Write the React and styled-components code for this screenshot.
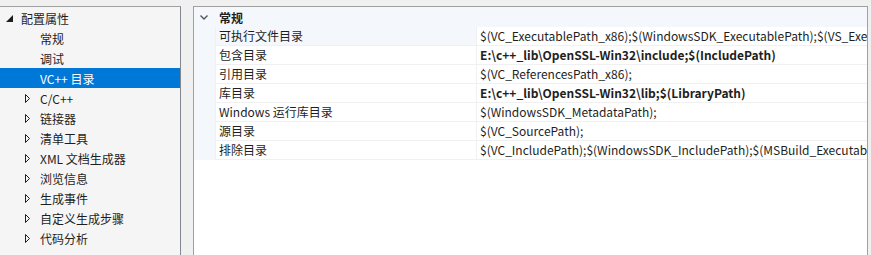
import React from 'react';
import styled, { createGlobalStyle } from 'styled-components';

const Global = createGlobalStyle`
  html, body {
    margin: 0;
    background: #f0f0f0;
  }
  body {
    font-family: "Noto Sans CJK SC", "Noto Sans", sans-serif;
    font-size: 12px;
    color: #1e1e1e;
  }
`;

const Frame = styled.div`
  display: flex;
  height: 255px;
  padding-top: 6px;
  box-sizing: border-box;
  overflow: hidden;
`;

const TreePanel = styled.div`
  width: 181px;
  flex: none;
  box-sizing: border-box;
  background: #f5f5f5;
  border-top: 1px solid #a0a0a0;
  border-right: 1px solid #828790;
  padding-top: 1px;
`;

const TreeItem = styled.div`
  display: flex;
  align-items: center;
  height: 20px;
  padding-left: ${(p) => p.$indent}px;
  background: ${(p) => (p.$selected ? '#0078d7' : 'transparent')};
  color: ${(p) => (p.$selected ? '#fff' : '#1e1e1e')};
  white-space: nowrap;
`;

const Toggle = styled.span`
  width: 15px;
  flex: none;
  display: flex;
  align-items: center;
`;

const GridPanel = styled.div`
  margin-left: 12px;
  width: 675px;
  flex: none;
  box-sizing: border-box;
  background: #fff;
  border-top: 1px solid #a0a0a0;
  border-left: 1px solid #a0a0a0;
  border-right: 1px solid #a0a0a0;
`;

const Category = styled.div`
  display: flex;
  align-items: center;
  height: 20px;
  background: #f4f7fc;
  font-weight: bold;
  padding-left: 6px;
`;

const Chevron = styled.span`
  width: 19px;
  display: flex;
  align-items: center;
`;

const Row = styled.div`
  display: grid;
  grid-template-columns: 21px 260px 1fr;
  column-gap: 1px;
  height: 19px;
  border-bottom: 1px solid #f0f0f0;
  box-sizing: border-box;
  background: #f0f0f0;
`;

const Gutter = styled.div`
  background: #f4f7fc;
  margin-bottom: -1px;
`;

const Cell = styled.div`
  background: ${(p) => (p.$focus ? '#f4f7fc' : '#fff')};
  padding-left: 3px;
  line-height: 18px;
  white-space: nowrap;
  overflow: hidden;
  font-weight: ${(p) => (p.$bold ? 'bold' : 'normal')};
`;

const Expanded = () => (
  <svg width="7" height="7" viewBox="0 0 7 7">
    <polygon points="7,0 7,7 0,7" fill="#1e1e1e" />
  </svg>
);

const Collapsed = () => (
  <svg width="5" height="9" viewBox="0 0 5 9">
    <polygon points="0.5,0.5 4.5,4.5 0.5,8.5" fill="none" stroke="#1e1e1e" strokeWidth="1" />
  </svg>
);

const Down = () => (
  <svg width="8" height="5" viewBox="0 0 8 5">
    <polyline points="0.5,0.5 4,4 7.5,0.5" fill="none" stroke="#555" strokeWidth="1.4" />
  </svg>
);

const tree = [
  { label: '常规' },
  { label: '调试' },
  { label: 'VC++ 目录', selected: true },
  { label: 'C/C++', folder: true },
  { label: '链接器', folder: true },
  { label: '清单工具', folder: true },
  { label: 'XML 文档生成器', folder: true },
  { label: '浏览信息', folder: true },
  { label: '生成事件', folder: true },
  { label: '自定义生成步骤', folder: true },
  { label: '代码分析', folder: true },
];

const rows = [
  ['可执行文件目录', '$(VC_ExecutablePath_x86);$(WindowsSDK_ExecutablePath);$(VS_ExecutablePath);$(MSBuild_ExecutablePath);$(SystemRoot)'],
  ['包含目录', 'E:\\c++_lib\\OpenSSL-Win32\\include;$(IncludePath)', true],
  ['引用目录', '$(VC_ReferencesPath_x86);'],
  ['库目录', 'E:\\c++_lib\\OpenSSL-Win32\\lib;$(LibraryPath)', true],
  ['Windows 运行库目录', '$(WindowsSDK_MetadataPath);'],
  ['源目录', '$(VC_SourcePath);'],
  ['排除目录', '$(VC_IncludePath);$(WindowsSDK_IncludePath);$(MSBuild_ExecutablePath);$(VC_LibraryPath_x86);'],
];

export default function App() {
  return (
    <>
      <Global />
      <Frame>
        <TreePanel>
          <TreeItem $indent={6}>
            <Toggle><Expanded /></Toggle>
            配置属性
          </TreeItem>
          {tree.map((t) => (
            <TreeItem key={t.label} $indent={25} $selected={t.selected}>
              <Toggle>{t.folder && <Collapsed />}</Toggle>
              {t.label}
            </TreeItem>
          ))}
        </TreePanel>
        <GridPanel>
          <Category>
            <Chevron><Down /></Chevron>
            常规
          </Category>
          {rows.map(([name, value, bold], i) => (
            <Row key={name}>
              <Gutter />
              <Cell $focus={i === 0}>{name}</Cell>
              <Cell $bold={bold}>{value}</Cell>
            </Row>
          ))}
        </GridPanel>
      </Frame>
    </>
  );
}
